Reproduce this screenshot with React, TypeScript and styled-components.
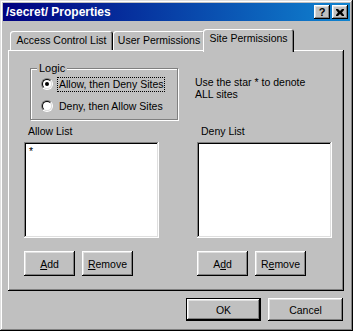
import React from "react";
import styled, { createGlobalStyle, css } from "styled-components";

const GlobalStyle = createGlobalStyle`
  body {
    margin: 0;
    background: #c0c0c0;
    font-family: "Liberation Sans", Arial, sans-serif;
    font-size: 10.5px;
    color: #000;
  }
`;

const raised = css`
  box-shadow: inset -1px -1px #000, inset 1px 1px #fff, inset -2px -2px #808080, inset 2px 2px #dfdfdf;
`;

const Window = styled.div`
  width: 353px;
  height: 331px;
  box-sizing: border-box;
  padding: 3px;
  background: #c0c0c0;
  display: flex;
  flex-direction: column;
  box-shadow: inset -1px -1px #000, inset 1px 1px #dfdfdf, inset -2px -2px #808080, inset 2px 2px #fff;
`;

const TitleBar = styled.div`
  height: 18px;
  display: flex;
  align-items: center;
  padding: 0 2px 0 3px;
  background: linear-gradient(90deg, #000080, #1084d0);
  color: #fff;
`;

const Title = styled.div`
  flex: 1;
  font-weight: bold;
  font-size: 12px;
`;

const TitleButton = styled.div<{ $gap?: number }>`
  width: 16px;
  height: 14px;
  margin-left: ${(p) => p.$gap ?? 0}px;
  background: #c0c0c0;
  color: #000;
  display: flex;
  align-items: center;
  justify-content: center;
  font-weight: bold;
  font-size: 11px;
  ${raised}
`;

const Body = styled.div`
  flex: 1;
  display: flex;
  flex-direction: column;
  padding: 8px 6px 0 5px;
`;

const TabRow = styled.div`
  display: flex;
  align-items: flex-end;
  height: 21px;
  padding-left: 2px;
`;

const Tab = styled.div<{ $active?: boolean; $w: number }>`
  position: relative;
  box-sizing: border-box;
  width: ${(p) => p.$w}px;
  height: ${(p) => (p.$active ? 23 : 19)}px;
  margin: ${(p) => (p.$active ? "0 -2px -2px -2px" : "0")};
  z-index: ${(p) => (p.$active ? 1 : 0)};
  padding-top: 3px;
  text-align: center;
  font-size: 10.5px;
  background: #c0c0c0;
  border-radius: 3px 3px 0 0;
  box-shadow: inset 1px 1px #fff, inset -1px 0 #000, inset -2px 0 #808080;
`;

const Panel = styled.div`
  height: 241px;
  box-sizing: border-box;
  padding-top: 18px;
  display: flex;
  flex-direction: column;
  box-shadow: inset -1px -1px #000, inset 1px 1px #fff, inset -2px -2px #808080;
`;

const TopRow = styled.div`
  display: flex;
  align-items: flex-start;
`;

const Group = styled.div`
  position: relative;
  width: 148px;
  height: 52px;
  box-sizing: border-box;
  margin-left: 22px;
  padding: 8px 0 0 10px;
  display: flex;
  flex-direction: column;
  gap: 8px;
  border: 1px solid #808080;
  box-shadow: inset 1px 1px #fff, 1px 1px #fff;
`;

const GroupLabel = styled.span`
  position: absolute;
  top: -7px;
  left: 6px;
  padding: 0 2px;
  background: #c0c0c0;
  line-height: 13px;
  font-size: 11px;
`;

const RadioRow = styled.div`
  display: flex;
  align-items: center;
  height: 14px;
`;

const RadioOuter = styled.div`
  width: 12px;
  height: 12px;
  box-sizing: border-box;
  border-radius: 50%;
  border: 1px solid;
  border-color: #808080 #fff #fff #808080;
  margin-right: 5px;
`;

const RadioInner = styled.div`
  width: 10px;
  height: 10px;
  box-sizing: border-box;
  border-radius: 50%;
  border: 1px solid;
  border-color: #000 #dfdfdf #dfdfdf #000;
  background: #fff;
  display: flex;
  align-items: center;
  justify-content: center;
`;

const Dot = styled.div`
  width: 4px;
  height: 4px;
  border-radius: 50%;
  background: #000;
`;

const RadioText = styled.span<{ $focus?: boolean }>`
  padding: 0 1px;
  line-height: 13px;
  outline: ${(p) => (p.$focus ? "1px dotted #000" : "none")};
`;

const Hint = styled.div`
  margin: 8px 0 0 17px;
  line-height: 12px;
`;

const Columns = styled.div`
  display: flex;
  margin-top: 5px;
  padding-left: 16px;
  gap: 38px;
`;

const Column = styled.div`
  width: 135px;
  display: flex;
  flex-direction: column;
`;

const ListLabel = styled.div`
  line-height: 13px;
  padding-left: 4px;
  margin-bottom: 4px;
`;

const ListBox = styled.div`
  height: 96px;
  background: #fff;
  padding: 4px 5px;
  box-sizing: border-box;
  line-height: 10px;
  box-shadow: inset -1px -1px #fff, inset 1px 1px #808080, inset -2px -2px #dfdfdf, inset 2px 2px #000;
`;

const ButtonRow = styled.div<{ $end?: boolean }>`
  display: flex;
  gap: 7px;
  justify-content: ${(p) => (p.$end ? "flex-end" : "flex-start")};
`;

const ListButtons = styled(ButtonRow)`
  margin-top: 13px;
`;

const Button = styled.div<{ $w: number; $h?: number; $default?: boolean }>`
  width: ${(p) => p.$w}px;
  height: ${(p) => p.$h ?? 25}px;
  display: flex;
  align-items: center;
  justify-content: center;
  background: #c0c0c0;
  ${(p) =>
    p.$default
      ? css`
          box-shadow: inset 0 0 0 1px #000, inset -2px -2px #000, inset 2px 2px #fff, inset -3px -3px #808080, inset 3px 3px #dfdfdf;
        `
      : raised}
`;

const Footer = styled(ButtonRow)`
  margin-top: 7px;
  padding-right: 1px;
`;

const Key = styled.span`
  text-decoration: underline;
`;

function Radio({ checked }: { checked?: boolean }) {
  return (
    <RadioOuter>
      <RadioInner>{checked && <Dot />}</RadioInner>
    </RadioOuter>
  );
}

export default function App() {
  return (
    <>
      <GlobalStyle />
      <Window>
        <TitleBar>
          <Title>/secret/ Properties</Title>
          <TitleButton>?</TitleButton>
          <TitleButton $gap={2}>
            <svg width="8" height="7" viewBox="0 0 8 7">
              <path d="M0 0h2l2 2 2-2h2v1l-2 2.5 2 2.5v1h-2l-2-2-2 2h-2v-1l2-2.5-2-2.5z" fill="#000" />
            </svg>
          </TitleButton>
        </TitleBar>
        <Body>
          <TabRow>
            <Tab $w={103}>Access Control List</Tab>
            <Tab $w={92}>User Permissions</Tab>
            <Tab $w={91} $active>
              Site Permissions
            </Tab>
          </TabRow>
          <Panel>
            <TopRow>
              <Group>
                <GroupLabel>Logic</GroupLabel>
                <RadioRow>
                  <Radio checked />
                  <RadioText $focus>Allow, then Deny Sites</RadioText>
                </RadioRow>
                <RadioRow>
                  <Radio />
                  <RadioText>Deny, then Allow Sites</RadioText>
                </RadioRow>
              </Group>
              <Hint>
                Use the star * to denote
                <br />
                ALL sites
              </Hint>
            </TopRow>
            <Columns>
              <Column>
                <ListLabel>Allow List</ListLabel>
                <ListBox>*</ListBox>
                <ListButtons>
                  <Button $w={51}>
                    <Key>A</Key>dd
                  </Button>
                  <Button $w={51}>
                    <Key>R</Key>emove
                  </Button>
                </ListButtons>
              </Column>
              <Column>
                <ListLabel>Deny List</ListLabel>
                <ListBox />
                <ListButtons>
                  <Button $w={51}>
                    A<Key>d</Key>d
                  </Button>
                  <Button $w={51}>
                    R<Key>e</Key>move
                  </Button>
                </ListButtons>
              </Column>
            </Columns>
          </Panel>
          <Footer $end>
            <Button $w={75} $h={23} $default>
              OK
            </Button>
            <Button $w={75} $h={23}>
              Cancel
            </Button>
          </Footer>
        </Body>
      </Window>
    </>
  );
}
